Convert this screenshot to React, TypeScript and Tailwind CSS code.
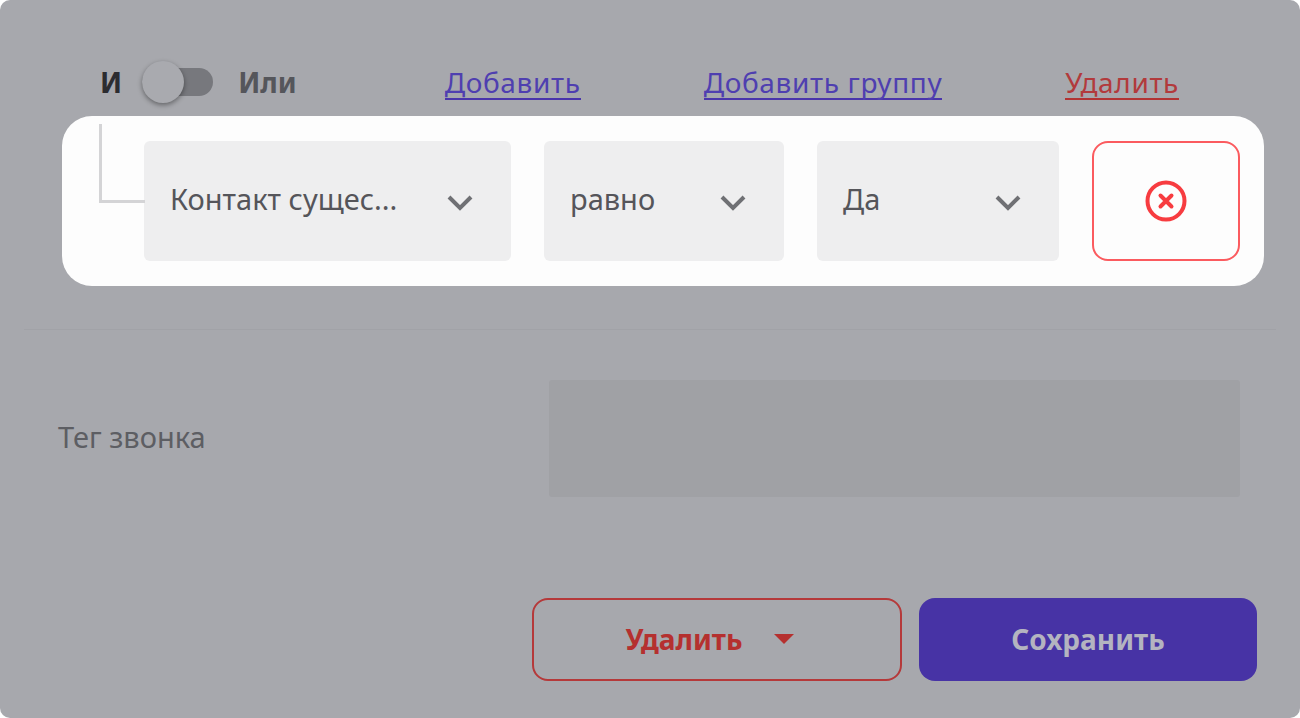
const font = { fontFamily: '"Noto Sans", sans-serif' };

// Grey select box with a chevron on the right
function SelectBox({ label, width }: { label: string; width: string }) {
  return (
    <div className={`${width} h-[120px] flex items-center justify-between rounded-md bg-[#eeeeef] pl-[26px] pr-[38px] shrink-0`}>
      <span className="text-[29px] text-[#55555a] leading-none -mt-[5px]">{label}</span>
      <svg width="26" height="17" viewBox="0 0 26 17" fill="none" stroke="#6f7074" strokeWidth="4" className="mt-[3px]">
        <path d="M2 3l11 11L24 3" />
      </svg>
    </div>
  );
}

export default function App() {
  return (
    <div className="w-[1300px] h-[718px] bg-white overflow-hidden" style={font}>
      <div className="h-full rounded-[10px] bg-[#a7a8ad] flex flex-col">
        {/* Condition toolbar */}
        <div className="h-[116px] pt-[62px] pl-[100px] flex items-start">
          <div className="h-[40px] flex items-center">
            <span className="text-[28px] font-bold text-[#2c2c30] leading-none">И</span>
            <div className="relative ml-[20px] w-[71px] h-[28px] rounded-full bg-[#77787d]">
              <div className="absolute left-0 -top-[7px] w-[42px] h-[42px] rounded-full bg-[#a9aaaf] shadow-[0_2px_5px_rgba(0,0,0,0.4)]" />
            </div>
            <span className="ml-[25px] text-[28px] font-bold text-[#55565b] leading-none">Или</span>
          </div>
          <a className="ml-[148px] h-[38px] text-[28px] tracking-[0.65px] leading-[40px] text-[#4f3fb0] border-b-2 border-[#4a35ab]">Добавить</a>
          <a className="ml-[123px] h-[38px] text-[28px] tracking-[0.65px] leading-[40px] text-[#4f3fb0] border-b-2 border-[#4a35ab]">Добавить группу</a>
          <a className="ml-[123px] h-[38px] text-[28px] tracking-[0.65px] leading-[40px] text-[#b23a3c] border-b-2 border-[#b23333]">Удалить</a>
        </div>

        {/* Highlighted condition row */}
        <div className="relative ml-[62px] w-[1202px] h-[170px] rounded-[30px] bg-[#fdfdfd] flex items-center gap-[33px] pl-[82px] shrink-0">
          <div className="absolute left-[37px] top-[8px] w-[46px] h-[79px] border-l-[3px] border-b-[3px] border-[#d4d4d6]" />
          <SelectBox label="Контакт сущес..." width="w-[367px]" />
          <SelectBox label="равно" width="w-[240px]" />
          <SelectBox label="Да" width="w-[242px]" />
          <button className="w-[148px] h-[120px] rounded-[16px] border-2 border-[#fb5b5f] flex items-center justify-center shrink-0">
            <svg width="42" height="42" viewBox="0 0 42 42" fill="none" stroke="#f73c40" strokeWidth="4">
              <circle cx="21" cy="21" r="18.5" />
              <path d="M15.5 15.5l11 11M26.5 15.5l-11 11" strokeLinecap="round" />
            </svg>
          </button>
        </div>

        <div className="mt-[43px] mx-[24px] h-px bg-[#a1a2a7] shrink-0" />

        {/* Call tag field */}
        <div className="mt-[50px] pl-[58px] pr-[60px] flex items-center justify-between">
          <span className="text-[29px] text-[#5d5e63] -mt-[3px]">Тег звонка</span>
          <div className="w-[691px] h-[117px] rounded-[3px] bg-[#a0a1a5]" />
        </div>

        {/* Footer buttons */}
        <div className="mt-[101px] pr-[43px] flex justify-end gap-[17px]">
          <button className="w-[370px] h-[83px] rounded-[16px] border-2 border-[#b5393a] flex items-center justify-center gap-[32px] pr-[14px] pb-[2px] text-[28px] font-bold text-[#b5302f]">
            Удалить
            <span className="w-0 h-0 border-x-[10px] border-x-transparent border-t-[10px] border-t-[#b5302f]" />
          </button>
          <button className="w-[338px] h-[83px] rounded-[16px] bg-[#4733a5] pb-[2px] text-[28px] font-bold text-[#b4b4c0]">Сохранить</button>
        </div>
      </div>
    </div>
  );
}
